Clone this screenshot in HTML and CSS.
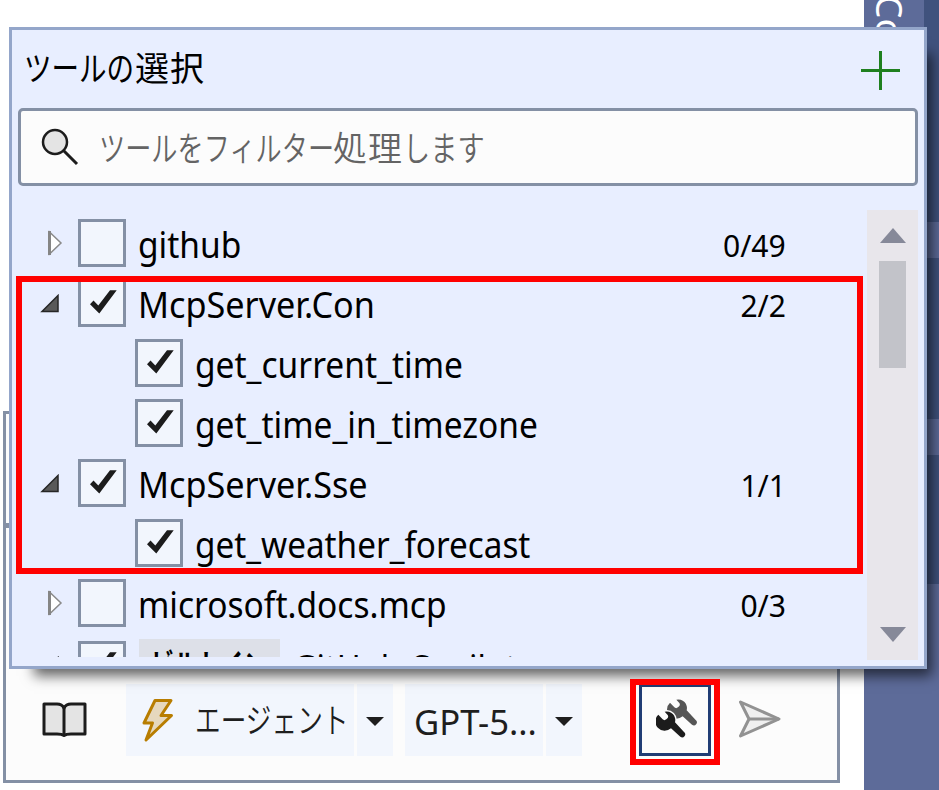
FILE: index.html
```html
<!DOCTYPE html>
<html lang="ja">
<head>
<meta charset="utf-8">
<title>ツールの選択</title>
<link rel="stylesheet" href="styles.css">
</head>
<body>
<svg class="defs" width="0" height="0">
  <symbol id="check" viewBox="0 0 42 42"><path d="M9 22.300 12.500 18.500 17.300 23.500 29 8.200H35.700L18.300 31.600Z" fill="#1c1c1c"/></symbol>
  <symbol id="closed" viewBox="0 0 16 28"><path d="M2.500 3 14 14 2.500 25Z" fill="#fff" stroke="#8a8a8a" stroke-width="1.500"/><path d="M2.500 2V26" stroke="#858585" stroke-width="3"/></symbol>
  <symbol id="open" viewBox="0 0 20 20"><path d="M2 17.500 18 1.500V17.500Z" fill="#595959" stroke="#262626" stroke-width="1.500"/></symbol>
  <symbol id="wrench" viewBox="0 0 126 126" overflow="visible"><path d="M24 38A26 26 0 0 1 55 70L82 99A8 8 0 0 1 71 113L43 88A27 27 0 0 1 5 47L18 61Q23 66 29 61L33 57Q36 53 33 48Z"/></symbol>
</svg>
<div class="app">
  <main class="chat">
    <section class="composer">
      <div class="context"></div>
      <div class="bar">
        <button class="book"><svg width="48" height="40" viewBox="0 0 48 40"><path d="M4 5H17Q22 5 24 9Q26 5 31 5H45V35H31Q26 35 24 36.500Q22 35 17 35H4Z" fill="#e4e4e4" stroke="#1c1c1c" stroke-width="3" stroke-linejoin="round"/><path d="M24 8V36" stroke="#1c1c1c" stroke-width="3"/></svg></button>
        <button class="mode"><svg width="34" height="46" viewBox="0 0 34 46"><path d="M14 3.500H30L20 18.500H30.500L5 43 11.500 26H3Z" fill="#e6d8bd" stroke="#b87d00" stroke-width="3" stroke-linejoin="round"/></svg><span class="fit agent">エージェント</span></button>
        <button class="drop"><i></i></button>
        <button class="model"><span class="fit gpt">GPT-5...</span></button>
        <button class="drop"><i></i></button>
        <button class="tools"><svg width="42" height="42" viewBox="0 0 126 126"><use href="#wrench" x="37" y="-36" width="126" height="126" fill="#555"/><use href="#wrench" x="2" width="126" height="126" fill="#fcfcfc" stroke="#fcfcfc" stroke-width="9"/><use href="#wrench" x="2" width="126" height="126" fill="#1c1c1c"/></svg></button>
        <button class="send"><svg width="46" height="42" viewBox="0 0 46 42"><path d="M3.500 3 42 20 3.500 37 12 20Z" fill="#f0f0f0" stroke="#929292" stroke-width="3" stroke-linejoin="round"/><path d="M12 20H42" stroke="#929292" stroke-width="3"/></svg></button>
      </div>
    </section>
  </main>
  <aside class="tab"><span>Copilot</span></aside>
  <div class="edge"><i></i><i></i><i></i></div>
</div>

<div class="popup">
  <header><h1><span class="kana k4">ツールの</span><span class="kanji">選択</span></h1><svg width="40" height="40" viewBox="0 0 40 40"><path d="M0 19.500H39M19.500 0V39" stroke="#1f801f" stroke-width="3"/></svg></header>
  <div class="search"><svg width="38" height="38" viewBox="0 0 38 38"><circle cx="14" cy="14" r="12" fill="#e4e4e4" stroke="#1c1c1c" stroke-width="2.500"/><path d="M22.500 22.500 36 36" stroke="#1c1c1c" stroke-width="3"/></svg><div class="hint"><span class="kana k9">ツールをフィルター</span><span class="kanji">処理</span><span class="kana k3">します</span></div></div>
  <div class="body">
    <div class="list">
      <div class="row"><svg class="closed"><use href="#closed"/></svg><b class="box"></b><span class="fit">github</span><em>0/49</em></div>
      <div class="row"><svg class="open"><use href="#open"/></svg><b class="box"><svg><use href="#check"/></svg></b><span class="fit mcp">McpServer.Con</span><em>2/2</em></div>
      <div class="row child"><b class="box"><svg><use href="#check"/></svg></b><span class="fit">get_current_time</span></div>
      <div class="row child"><b class="box"><svg><use href="#check"/></svg></b><span class="fit">get_time_in_timezone</span></div>
      <div class="row"><svg class="open"><use href="#open"/></svg><b class="box"><svg><use href="#check"/></svg></b><span class="fit mcp">McpServer.Sse</span><em>1/1</em></div>
      <div class="row child"><b class="box"><svg><use href="#check"/></svg></b><span class="fit long">get_weather_forecast</span></div>
      <div class="row"><svg class="closed"><use href="#closed"/></svg><b class="box"></b><span class="fit">microsoft.docs.mcp</span><em>0/3</em></div>
      <div class="row last"><svg class="open"><use href="#open"/></svg><b class="box"><svg><use href="#check"/></svg></b><span class="badge"><span class="kana">ビルトイン</span></span><span class="fit">GitHub Copilot</span><em>16/16</em></div>
    </div>
    <div class="scroll"><i class="up"></i><i class="thumb"></i><i class="down"></i></div>
  </div>
</div>
<div class="mark mark-list"></div>
<div class="mark mark-tools"></div>
</body>
</html>
```
FILE: styles.css
```css
* { box-sizing: border-box; }
body { margin: 0; width: 939px; height: 790px; overflow: hidden; background: #fff; color: #000; font-family: "Noto Sans", "Noto Sans CJK JP", sans-serif; position: relative; }
.defs { position: absolute; }
svg { display: block; flex: none; }
button { border: 0; padding: 0; margin: 0; background: none; font: inherit; color: #1e1e1e; display: flex; align-items: center; }
.fit { display: block; white-space: nowrap; transform: scaleX(.931); transform-origin: 0 50%; flex: none; }
.kana { display: inline-block; white-space: nowrap; transform: scaleX(.77); transform-origin: 0 50%; }
.kanji { letter-spacing: 1px; }

.app { display: grid; grid-template-columns: 864px 60px 15px; height: 790px; }
.chat { padding: 411px 24px 7px 3px; }
.composer { height: 372px; border: 3px solid #8490a5; background: #fcfcfc; }
.context { height: 114px; border-bottom: 5px solid #8490a5; }
.bar { display: flex; margin-top: 156px; padding-left: 34px; height: 72px; align-items: center; }
.book { width: 86px; padding-bottom: 2px; }
.mode, .model, .drop { background: #f2f6fd; height: 72px; flex: none; }
.mode { width: 228px; padding-left: 15px; }
.mode .agent { margin-left: 20px; font-size: 34px; line-height: 50px; font-weight: 350; transform: scaleX(.755); }
.drop { width: 36px; margin-left: 3px; justify-content: center; }
.drop i { border: 9px solid transparent; border-top-color: #1e1e1e; border-bottom: 0; margin-top: 2px; }
.model { width: 138px; margin-left: 12px; padding: 3px 0 0 9px; }
.model .gpt { font-size: 35px; line-height: 50px; transform: scaleX(.99); }
.tools { width: 72px; height: 72px; margin-left: 57px; border: 3px solid #213d75; padding-left: 14px; flex: none; }
.send { margin-left: 26px; }
.tab { background: #5d6b99; color: #fff; overflow: hidden; }
.tab span { display: block; writing-mode: vertical-rl; font-size: 37px; line-height: 40px; margin: -5px 0 0 6px; }
.edge { background: #40527d; display: grid; grid-template-rows: 222px 36px 161px 36px 129px 1fr; }
.edge i { background: #5d6b99; }
.edge i:nth-child(1) { grid-row: 2; }
.edge i:nth-child(2) { grid-row: 4; }
.edge i:nth-child(3) { grid-row: 6; }

.popup { position: absolute; left: 9px; top: 27px; width: 918px; height: 642px; border: 3px solid #94a6ca; background: #e8eeff; box-shadow: 15px 17px 12px -10px rgba(0, 0, 0, .6); }
header { display: flex; height: 78px; justify-content: space-between; padding: 0 23px 0 12px; align-items: center; }
header svg { margin-top: 4px; }
h1 { margin: 0 0 3px; font-size: 34px; font-weight: 400; line-height: 50px; white-space: nowrap; }
.k4 { width: 111px; transform: scaleX(.81); }
.k9 { width: 234px; }
.k3 { width: 82px; transform: scaleX(.8); }
.search { display: flex; align-items: center; height: 78px; margin: 0 6px; border: 3px solid #8490a5; border-radius: 5px; background: #fcfcfc; padding-left: 20px; }
.hint { margin: 2px 0 0 20px; color: #646464; font-size: 34px; font-weight: 350; line-height: 50px; white-space: nowrap; }
.body { display: flex; justify-content: space-between; padding: 24px 6px 0 0; }
.list { width: 780px; height: 447px; padding-top: 3px; overflow: hidden; font-size: 36px; line-height: 50px; }
.row { display: flex; height: 60px; align-items: center; padding-left: 27px; }
.row .fit { padding-top: 4px; margin-left: -1px; }
.row .mcp { transform: scaleX(.95); }
.row .long { transform: scaleX(.924); }
.child { padding-left: 123px; }
.closed { width: 16px; height: 28px; margin: 0 15px 0 8px; }
.open { width: 20px; height: 20px; margin: 1px 18px 0 1px; }
.box { width: 48px; height: 48px; flex: none; border: 3px solid #8490a5; background: #f2f6fd; margin-right: 13px; }
.box svg { width: 42px; height: 42px; }
.row em { margin-left: auto; margin-right: 6px; padding-top: 4px; font-style: normal; font-size: 31px; transform: scaleX(.97); transform-origin: 100% 50%; }
.last { padding-top: 4px; }
.badge { background: #dde0e8; font-size: 30px; font-weight: 700; height: 52px; line-height: 50px; padding-left: 12px; width: 141px; margin-right: 16px; flex: none; overflow: hidden; }
.row.last .fit { transform: scaleX(.9); padding-top: 5px; margin-left: -3px; }
.scroll { width: 51px; height: 450px; background: #e8e6eb; display: flex; flex-direction: column; align-items: center; padding: 18px 0; }
.up, .down { border: 13.5px solid transparent; }
.up { border-top: 0; border-bottom: 15px solid #868999; }
.down { border-bottom: 0; border-top: 15px solid #868999; margin-top: auto; }
.thumb { width: 27px; height: 107px; margin-top: 18px; background: #c2c3c9; }
.mark { position: absolute; border: 6px solid #f00; }
.mark-list { left: 16px; top: 276px; width: 847px; height: 298px; }
.mark-tools { left: 630px; top: 679px; width: 90px; height: 86px; }
```
